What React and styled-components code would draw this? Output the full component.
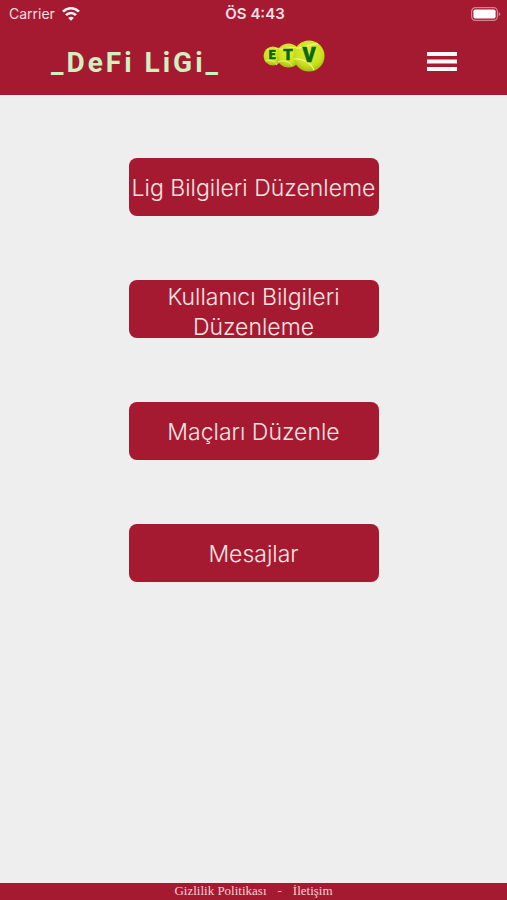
import React from "react";
import styled, { createGlobalStyle } from "styled-components";

const crimson = "#a51a30";

const GlobalStyle = createGlobalStyle`
  * { box-sizing: border-box; }
  body { margin: 0; background: #eeeeee; }
`;

const Screen = styled.div`
  min-height: 100vh;
  display: flex;
  flex-direction: column;
  background: #eeeeee;
  font-family: Inter, "Liberation Sans", sans-serif;
`;

const Header = styled.header`
  background: ${crimson};
  color: #fff0f0;
`;

const StatusBar = styled.div`
  height: 27px;
  padding: 0 6px 0 9px;
  display: grid;
  grid-template-columns: 1fr auto 1fr;
  align-items: center;
  font-size: 14px;
  line-height: 20px;
  color: #f8dfe2;
`;

const Carrier = styled.span`
  display: flex;
  align-items: center;
  gap: 7px;
`;

const Clock = styled.time`
  font-size: 15px;
  font-weight: 600;
`;

const BatterySlot = styled.span`
  display: flex;
  justify-content: flex-end;
`;

const NavBar = styled.div`
  height: 68px;
  padding: 0 50px 0 51px;
  display: flex;
  align-items: center;
`;

const Title = styled.h1`
  margin: 0;
  padding-top: 4px;
  font-family: Roboto, sans-serif;
  font-size: 28px;
  line-height: 32px;
  font-weight: 700;
  letter-spacing: 3px;
  white-space: nowrap;
  color: #d0f0c0;
`;

const Logo = styled.svg`
  display: block;
  flex: none;
  margin: 0 auto 9px 42px;
`;

const MenuButton = styled.button`
  padding: 0;
  border: 0;
  background: none;
  color: #fff8f8;
  cursor: pointer;

  svg { display: block; }
`;

const Main = styled.main`
  flex: 1;
  display: flex;
  flex-direction: column;
  align-items: center;
  gap: 64px;
  padding: 63px 16px;
`;

const ActionButton = styled.button`
  width: 250px;
  height: 58px;
  padding: 2px 0 0;
  border: 0;
  border-radius: 8px;
  background: ${crimson};
  color: #fce4e4;
  font-family: inherit;
  font-size: 23px;
  font-weight: 300;
  line-height: 30px;
  cursor: pointer;
`;

const Footer = styled.footer`
  display: flex;
  justify-content: center;
  gap: 11px;
  background: ${crimson};
  color: #f3cfd4;
  font-family: "Liberation Serif", serif;
  font-size: 13px;
  line-height: 16px;
  padding-bottom: 1px;
`;

const FooterLink = styled.a`
  color: inherit;
  text-decoration: none;
`;

const actions = [
  "Lig Bilgileri Düzenleme",
  "Kullanıcı Bilgileri Düzenleme",
  "Maçları Düzenle",
  "Mesajlar",
];

function WifiIcon() {
  return (
    <svg width="18" height="14" viewBox="0 0 18 14" aria-hidden="true" fill="none" stroke="#fff4f4" strokeWidth="2.6">
      <path d="M1 4.600C5.400.1 12.600.1 17 4.600" />
      <path d="M4 8.100c2.800-2.900 7.200-2.900 10 0" />
      <path d="M9 13.700 6.200 10.900c1.500-1.500 4.100-1.500 5.600 0z" fill="#fff4f4" stroke="none" />
    </svg>
  );
}

function BatteryIcon() {
  return (
    <svg width="30" height="14" viewBox="0 0 30 14" role="img" aria-label="Battery full">
      <rect x=".6" y=".6" width="25.800" height="12.800" rx="3.800" fill="none" stroke="#d38390" strokeWidth="1.200" />
      <rect x="2.400" y="2.400" width="22.200" height="9.200" rx="1.800" fill="#fff" />
      <path d="M27.700 4.900c2.200.9 2.200 3.300 0 4.200z" fill="#d38390" />
    </svg>
  );
}

function BallLogo() {
  return (
    <Logo width="63" height="33" viewBox="0 0 63 33" role="img" aria-label="ETV">
      <defs>
        <radialGradient id="ball" cx=".5" cy=".35" r=".65">
          <stop offset="0" stopColor="#e2ef35" />
          <stop offset=".7" stopColor="#cbe01c" />
          <stop offset="1" stopColor="#a3b914" />
        </radialGradient>
      </defs>
      <circle cx="10" cy="16" r="9.500" fill="url(#ball)" />
      <path d="M4 9c5 2 9 0 12-1M2 21c5-2 10 0 12 4" fill="none" stroke="#f0f590" strokeWidth=".8" />
      <circle cx="25.500" cy="15.500" r="12" fill="url(#ball)" />
      <path d="M16 9c7 1 11-3 18-1M15 22c7-3 12 0 14 4" fill="none" stroke="#f0f590" strokeWidth=".9" />
      <circle cx="46" cy="16" r="15.500" fill="url(#ball)" />
      <path d="M33 8c9 1 14-5 22-4M31 19c9-1 17 4 20 11" fill="none" stroke="#f0f590" strokeWidth="1.200" />
      <g fill="#08670f" stroke="#08670f" strokeWidth=".6" fontFamily="Roboto, sans-serif" fontWeight="900" textAnchor="middle">
        <text x="9" y="19" fontSize="12">E</text>
        <text x="25" y="20" fontSize="15">T</text>
        <text x="46" y="22" fontSize="20">V</text>
      </g>
    </Logo>
  );
}

export default function App() {
  return (
    <Screen>
      <GlobalStyle />
      <Header>
        <StatusBar>
          <Carrier>Carrier <WifiIcon /></Carrier>
          <Clock>ÖS 4:43</Clock>
          <BatterySlot><BatteryIcon /></BatterySlot>
        </StatusBar>
        <NavBar>
          <Title>_DeFi LiGi_</Title>
          <BallLogo />
          <MenuButton type="button" aria-label="Menü">
            <svg width="30" height="19" viewBox="0 0 30 19" fill="currentColor">
              <path d="M0 0h30v4H0zM0 7.500h30v4H0zM0 15h30v4H0z" />
            </svg>
          </MenuButton>
        </NavBar>
      </Header>
      <Main>
        {actions.map((label) => (
          <ActionButton key={label} type="button">{label}</ActionButton>
        ))}
      </Main>
      <Footer>
        <FooterLink href="#gizlilik">Gizlilik Politikası</FooterLink>
        <span>-</span>
        <FooterLink href="#iletisim">İletişim</FooterLink>
      </Footer>
    </Screen>
  );
}
